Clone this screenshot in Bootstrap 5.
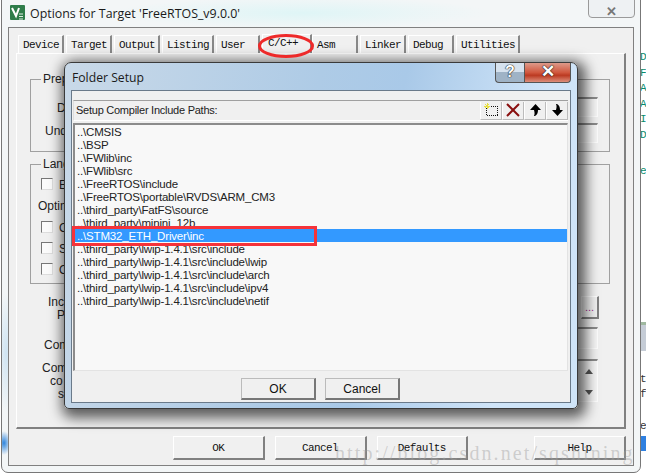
<!DOCTYPE html>
<html lang="en">
<head>
  <meta charset="UTF-8" />
  <meta name="viewport" content="width=device-width, initial-scale=1.0" />
  <title>Options for Target</title>
  <link href="https://cdn.jsdelivr.net/npm/bootstrap@5.3.0/dist/css/bootstrap.min.css" rel="stylesheet">
  <style>
    html, body { margin: 0; background: #fff; overflow: hidden; }
    .desk { position: relative; width: 646px; height: 475px; overflow: hidden; font-family: "Liberation Sans", Arial, sans-serif; font-size: 12px; color: #222; }

    /* code editor showing behind the window */
    .code-behind { position: absolute; left: 640px; top: 50px; width: 6px; font: 11px/15.5px "Liberation Mono", monospace; color: #0a8a6a; }
    .code-gap-1 { height: 21px; }
    .code-gap-2 { height: 192px; background: linear-gradient(#fff 0 74%, #9fb89f 74% 75.5%, #c5ccd6 75.5% 89%, #fff 89%); }
    .code-dark { color: #333; }
    .code-sel { height: 15px; margin-top: 2px; background: #2f80e0; }

    /* back window */
    .win-back { position: absolute; left: 1px; top: -8px; width: 640px; height: 481px; border: 1px solid #777; border-radius: 7px; padding: 0 6px 6px 6px;
      background: radial-gradient(ellipse 190px 16px at 300px 20px, #dff5f6, transparent), radial-gradient(ellipse 7px 12px at 2px 450px, #2f85dc, transparent), radial-gradient(ellipse 9px 60px at 4px 360px, #cfe4f2, transparent), #f3f6f7; }
    .win-title { height: 34px; padding: 12px 0 0 2px; }
    .win-title-text { font-family: "Open Sans", "Liberation Sans", sans-serif; font-size: 12.4px; color: #1a1a1a; margin-left: 5px; }
    .win-close { position: absolute; right: 5px; top: 0; width: 47px; height: 25px; border: 1px solid #9a9a9a; border-radius: 0 0 4px 4px; background: #eef1f3; color: #777; font: bold 13px/36px "Liberation Sans", sans-serif; text-align: center; }
    .win-client { height: 439px; background: #f0f0f0; border: 1px solid #808080; padding: 7px 7px 0 7px; }

    .tab-strip { height: 18px; padding-left: 2px; align-items: flex-end; }
    .tab-cell { height: 18px; padding-left: 4px; font: 11px/19px "Liberation Mono", monospace; letter-spacing: -.6px; color: #111; border-top: 1px solid #fff; border-left: 1px solid #fff; border-right: 2px solid #888; margin-right: 2px; background: #f0f0f0; }
    .tab-cell.on { height: 19px; line-height: 17px; margin-right: 0; padding-left: 5px; }
    .tab-page { height: 376px; border-top: 1px solid #fff; border-left: 1px solid #fff; border-right: 2px solid #808080; border-bottom: 2px solid #808080; padding: 25px 14px 0 13px; }
    .grp-box { border: 1px solid #a0a0a0; position: relative; }
    .grp-label { position: absolute; left: 10px; top: -8px; background: #f0f0f0; padding: 0 2px; line-height: 14px; }
    .grp-1 { height: 73px; }
    .grp-2 { height: 120px; margin-top: 12px; }
    .lab-line { position: absolute; line-height: 14px; white-space: nowrap; }
    .sunken { height: 20px; background: #f5f5f5; border-top: 2px solid #8a8a8a; border-left: 1px solid #e6e6e6; border-right: 1px solid #fdfdfd; border-bottom: 1px solid #fdfdfd; margin-left: auto; width: 60px; }
    .field-stack { position: absolute; right: 11px; top: 17px; width: 60px; gap: 6px; }
    .chk-box { width: 12px; height: 12px; background: #fbfbfb; border: 1px solid #8a8a8a; border-color: #777 #ddd #ddd #777; }

    .page-lower { height: 140px; position: relative; }
    .dots-btn { position: absolute; right: 11px; top: 12px; width: 18px; height: 23px; background: #f0f0f0; border-top: 1px solid #fff; border-left: 1px solid #fff; border-right: 2px solid #808080; border-bottom: 2px solid #808080; color: #a02c90; font-size: 11px; line-height: 20px; text-align: center; }
    .field-a { position: absolute; right: 12px; top: 43px; height: 22px; }
    .field-b { position: absolute; right: 12px; top: 75px; height: 43px; padding-right: 3px; }

    .btn-row { padding: 7px 0 0 157px; gap: 10px; }
    .old-btn { width: 92px; height: 24px; background: #f0f0f0; border: 0; border-top: 1px solid #fff; border-left: 1px solid #fff; border-right: 2px solid #808080; border-bottom: 2px solid #808080; border-radius: 0; padding: 0; color: #111; font: 11px/20px "Liberation Mono", monospace; letter-spacing: -.6px; }
    .old-btn-far { margin-left: 56px; }

    /* front dialog */
    .dlg { position: absolute; left: 64px; top: 62px; width: 514px; height: 347px; border: 1px solid #3a3a3a; border-radius: 7px 7px 5px 5px; box-shadow: 3px 4px 13px 5px rgba(0,0,0,.62); padding: 0 6px 6px 6px;
      background: linear-gradient(100deg, #c9d9e8 0%, #aecbe6 45%, #a9c9e8 60%, #cfe4f8 85%); }
    .dlg-title { height: 27px; padding: 7px 0 0 1px; font-family: "Open Sans", "Liberation Sans", sans-serif; font-size: 12.2px; color: #1a1a1a; line-height: 16px; }
    .cap-btns { position: absolute; right: 6px; top: 0; height: 20px; }
    .cap-help { width: 29px; height: 20px; border: 1px solid #555; border-top: 0; border-right: 0; border-radius: 0 0 0 4px; background: linear-gradient(#d6e2ee 50%, #9fb3c6 50%); color: #fff; text-align: center; font: bold 16px/18px "Liberation Sans", sans-serif; text-shadow: 0 0 1px #222, 0 0 1px #222, 0 0 1px #222; }
    .cap-close { width: 47px; height: 20px; border: 1px solid #555; border-top: 0; border-radius: 0 0 4px 0; background: linear-gradient(#dd9a8a 0, #d0573e 50%, #bb3a22 65%, #dd8f7c 100%); color: #fff; text-align: center; font: bold 17px/18px "Liberation Sans", sans-serif; text-shadow: 0 0 1px #222, 0 0 1px #222, 0 0 1px #222; }
    .dlg-body { height: 313px; background: #f0f0f0; border: 1px solid #6a7a8a; padding: 9px 2px 0 1px; }
    .path-head { height: 21px; border-top: 1px solid #a0a0a0; border-left: 1px solid #ddd; background: #f0f0f0; padding-left: 2px; border-bottom: 1px solid #fff; font-size: 11px; letter-spacing: -.25px; }
    .tool-btn { width: 22px; height: 18px; border-left: 1px solid #fff; border-right: 1px solid #bcbcbc; border-bottom: 1px solid #bcbcbc; }
    .path-list { height: 248px; margin-top: 2px; background: #f8f8f8; border-top: 2px solid #8c8c8c; border-left: 2px solid #8c8c8c; border-right: 1px solid #e3e3e3; border-bottom: 1px solid #e3e3e3; position: relative; font-size: 11.5px; letter-spacing: -.18px; }
    .path-row { height: 13px; line-height: 14px; padding-left: 2px; color: #222; white-space: nowrap; }
    .path-row.sel { background: #3399ff; color: #fff; }
    .mark-rect { position: absolute; left: -3px; top: 101px; width: 245px; height: 20px; border: 3px solid #f5333a; }
    .dlg-btns { padding: 7px 0 0 168px; gap: 9px; }
    .dlg-btn { width: 75px; height: 22px; background: #f0f0f0; border: 0; border-top: 1px solid #bbb; border-left: 1px solid #bbb; border-right: 2px solid #777; border-bottom: 2px solid #777; border-radius: 0; padding: 0; color: #111; font: 12px/18px "Liberation Sans", sans-serif; }

    .red-ring { position: absolute; left: 256px; top: 32px; }
    .water-mark { position: absolute; left: 335px; top: 441px; font: 20px/24px "Liberation Serif", serif; letter-spacing: 2.1px; color: rgba(160,160,160,.45); white-space: nowrap; }
  </style>
</head>
<body>
  <div class="desk">

    <div class="code-behind">
      <div>D</div><div>F</div><div>A</div><div>A</div><div>I</div><div>D</div>
      <div class="code-gap-1"></div><div>e</div>
      <div class="code-gap-2"></div>
      <div class="code-dark">t</div><div class="code-dark">f</div>
      <div class="code-dark mt-3">e</div>
      <div class="code-sel"></div>
    </div>

    <div class="win-back">
      <div class="win-title d-flex align-items-start">
        <svg width="15" height="15" viewBox="0 0 15 15" class="flex-shrink-0">
          <rect width="15" height="15" rx="1" fill="#2f7d4a"/>
          <path d="M2 3 L6 11 L9 3" fill="none" stroke="#fff" stroke-width="2"/>
          <path d="M9 9 h4 M9 11.5 h4 M9 14 h4" stroke="#dfeee4" stroke-width="1"/>
        </svg>
        <span class="win-title-text">Options for Target 'FreeRTOS_v9.0.0'</span>
      </div>
      <div class="win-close">✕</div>

      <div class="win-client">
        <div class="tab-strip d-flex">
          <div class="tab-cell" style="width:46px">Device</div>
          <div class="tab-cell" style="width:46px">Target</div>
          <div class="tab-cell" style="width:46px">Output</div>
          <div class="tab-cell" style="width:52px">Listing</div>
          <div class="tab-cell" style="width:44px">User</div>
          <div class="tab-cell on" style="width:50px">C/C++</div>
          <div class="tab-cell" style="width:46px">Asm</div>
          <div class="tab-cell" style="width:46px">Linker</div>
          <div class="tab-cell" style="width:46px">Debug</div>
          <div class="tab-cell" style="width:64px">Utilities</div>
        </div>

        <div class="tab-page">
          <div class="grp-box grp-1">
            <span class="grp-label">Prep</span>
            <span class="lab-line" style="left:26px;top:21px">D</span>
            <span class="lab-line" style="left:14px;top:44px">Und</span>
            <div class="field-stack d-flex flex-column">
              <div class="sunken"></div>
              <div class="sunken"></div>
            </div>
          </div>
          <div class="grp-box grp-2">
            <span class="grp-label">Lang</span>
            <div class="chk-box lab-line" style="left:10px;top:13px"></div>
            <span class="lab-line" style="left:28px;top:13px">E</span>
            <span class="lab-line" style="left:7px;top:34px">Optim</span>
            <div class="chk-box lab-line" style="left:10px;top:56px"></div>
            <span class="lab-line" style="left:28px;top:56px">O</span>
            <div class="chk-box lab-line" style="left:10px;top:77px"></div>
            <span class="lab-line" style="left:28px;top:77px">S</span>
            <div class="chk-box lab-line" style="left:10px;top:98px"></div>
            <span class="lab-line" style="left:28px;top:98px">O</span>
          </div>
          <div class="page-lower">
            <span class="lab-line" style="left:18px;top:11px">Inc</span>
            <span class="lab-line" style="left:27px;top:24px">P</span>
            <span class="lab-line" style="left:14px;top:54px">Com</span>
            <span class="lab-line" style="left:12px;top:77px">Com</span>
            <span class="lab-line" style="left:20px;top:90px">co</span>
            <span class="lab-line" style="left:28px;top:103px">s</span>
            <div class="dots-btn">...</div>
            <div class="sunken field-a"></div>
            <div class="sunken field-b d-flex flex-column justify-content-between align-items-end">
              <svg width="10" height="40" viewBox="0 0 10 40">
                <path d="M1 13 L9 13 L5 8 Z" fill="#555"/>
                <path d="M1 29 L9 29 L5 34 Z" fill="#555"/>
              </svg>
            </div>
          </div>
        </div>

        <div class="btn-row d-flex">
          <button class="old-btn">OK</button>
          <button class="old-btn">Cancel</button>
          <button class="old-btn">Defaults</button>
          <button class="old-btn old-btn-far">Help</button>
        </div>
      </div>
    </div>

    <div class="dlg">
      <div class="dlg-title">Folder Setup</div>
      <div class="cap-btns d-flex">
        <div class="cap-help">?</div>
        <div class="cap-close">✕</div>
      </div>
      <div class="dlg-body">
        <div class="path-head d-flex align-items-center">
          <span class="me-auto">Setup Compiler Include Paths:</span>
          <div class="tool-btn d-flex align-items-center justify-content-center">
            <svg width="14" height="14" viewBox="0 0 14 14" shape-rendering="crispEdges">
              <rect x="2.5" y="3.5" width="11" height="9" fill="none" stroke="#111" stroke-dasharray="1 1"/>
              <path d="M0 3 H6 M3 0 V6 M1 1 L5 5 M5 1 L1 5" stroke="#e8e040" stroke-width="1"/>
            </svg>
          </div>
          <div class="tool-btn d-flex align-items-center justify-content-center">
            <svg width="14" height="14" viewBox="0 0 14 14"><path d="M1 1 L13 13 M13 1 L1 13" stroke="#8a1010" stroke-width="2"/></svg>
          </div>
          <div class="tool-btn d-flex align-items-center justify-content-center">
            <svg width="13" height="14" viewBox="0 0 13 14"><path d="M6.5 1 L12 7 H9 C9 10 8 12 6 13 L5 13 C6 11 5.5 9 5 7 H1 Z" fill="#000"/></svg>
          </div>
          <div class="tool-btn d-flex align-items-center justify-content-center">
            <svg width="13" height="14" viewBox="0 0 13 14"><path d="M6.5 13 L12 7 H9 C9 4 8 2 6 1 L5 1 C6 3 5.5 5 5 7 H1 Z" fill="#000"/></svg>
          </div>
        </div>
        <div class="path-list">
          <div class="path-row">..\CMSIS</div>
          <div class="path-row">..\BSP</div>
          <div class="path-row">..\FWlib\inc</div>
          <div class="path-row">..\FWlib\src</div>
          <div class="path-row">..\FreeRTOS\include</div>
          <div class="path-row">..\FreeRTOS\portable\RVDS\ARM_CM3</div>
          <div class="path-row">..\third_party\FatFS\source</div>
          <div class="path-row">..\third_party\minini_12b</div>
          <div class="path-row sel">..\STM32_ETH_Driver\inc</div>
          <div class="path-row">..\third_party\lwip-1.4.1\src\include</div>
          <div class="path-row">..\third_party\lwip-1.4.1\src\include\lwip</div>
          <div class="path-row">..\third_party\lwip-1.4.1\src\include\arch</div>
          <div class="path-row">..\third_party\lwip-1.4.1\src\include\ipv4</div>
          <div class="path-row">..\third_party\lwip-1.4.1\src\include\netif</div>
          <div class="mark-rect"></div>
        </div>
        <div class="dlg-btns d-flex">
          <button class="dlg-btn">OK</button>
          <button class="dlg-btn">Cancel</button>
        </div>
      </div>
    </div>

    <svg class="red-ring" width="60" height="28" viewBox="0 0 60 28">
      <ellipse cx="30" cy="14" rx="26.5" ry="10.5" fill="none" stroke="#ee2a2a" stroke-width="3"/>
    </svg>
    <div class="water-mark">http://blog.csdn.net/sqshining</div>
  </div>

  <script src="https://cdn.jsdelivr.net/npm/bootstrap@5.3.0/dist/js/bootstrap.bundle.min.js"></script>
</body>
</html>
